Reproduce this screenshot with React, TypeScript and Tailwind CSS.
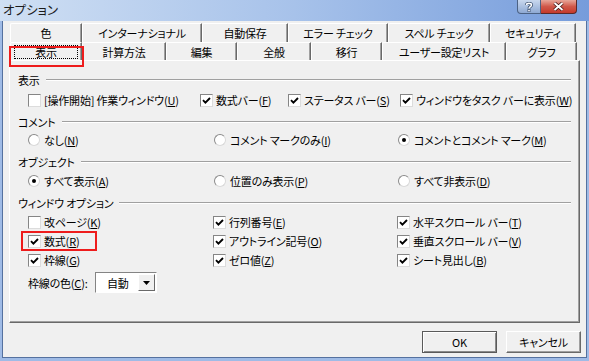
import React from 'react';

function Mn({ k }: { k: string }) {
  return (
    <>
      (<u className="underline-offset-[1px]">{k}</u>)
    </>
  );
}

function Check({ checked, label, k }: { checked?: boolean; label: string; k: string }) {
  return (
    <div className="flex items-center gap-[3px] whitespace-nowrap">
      <span className="flex h-[13px] w-[13px] shrink-0 items-center justify-center border border-t-[#858585] border-l-[#858585] border-b-[#dcdcdc] border-r-[#dcdcdc] bg-white">
        {checked && (
          <svg width="9" height="9" viewBox="0 0 9 9">
            <path d="M1 4.2 L3.4 6.6 L8 2" fill="none" stroke="#000" strokeWidth="1.9" />
          </svg>
        )}
      </span>
      <span>
        {label}
        <Mn k={k} />
      </span>
    </div>
  );
}

function Radio({ checked, label, k }: { checked?: boolean; label: string; k: string }) {
  return (
    <div className="flex items-center gap-[4px] whitespace-nowrap">
      <span className="flex h-[12px] w-[12px] shrink-0 items-center justify-center rounded-full border border-t-[#8a8a8a] border-l-[#8a8a8a] border-b-[#d8d8d8] border-r-[#d8d8d8] bg-white">
        {checked && <span className="h-[4px] w-[4px] rounded-full bg-black" />}
      </span>
      <span>
        {label}
        <Mn k={k} />
      </span>
    </div>
  );
}

function Group({ title }: { title: string }) {
  return (
    <div className="flex h-[18px] items-center gap-[6px]">
      <span className="whitespace-nowrap">{title}</span>
      <div className="h-[2px] flex-1 border-t border-t-[#a0a0a0] border-b border-b-white" />
    </div>
  );
}

function Tab({ label, w, h, selected }: { label: string; w: string; h: string; selected?: boolean }) {
  return (
    <div
      className={`flex ${w} ${h} shrink-0 items-center justify-center rounded-tl-[2px] border-l border-t border-l-white border-t-white border-r border-r-[#696969] bg-[#f0f0f0] shadow-[inset_-1px_0_0_#a0a0a0]`}
    >
      {selected ? (
        <span className="flex h-[14px] w-[64px] items-center justify-center border border-dotted border-black">{label}</span>
      ) : (
        <span className="whitespace-nowrap">{label}</span>
      )}
    </div>
  );
}

export default function App() {
  return (
    <div className="relative h-[361px] w-[589px] overflow-hidden bg-[#9fbbe6] text-[11px] leading-[14px] tracking-[-0.2px] text-black font-['Noto_Sans_CJK_JP','Noto_Sans',sans-serif] [font-feature-settings:'palt']">
      {/* title bar */}
      <div className="flex h-[21px] items-center justify-between bg-gradient-to-r from-[#cfdff3] via-[#a7c2ea] to-[#769cdb] pl-[3px]">
        <span className="mb-[2px] text-[12.5px] tracking-normal text-[#1b1b1b]">オプション</span>
        <div className="mr-[12px] flex self-start">
          <div className="flex h-[14px] w-[24px] items-center justify-center rounded-bl-[4px] border border-t-0 border-[#4c6284] bg-gradient-to-b from-[#c9d8ee] to-[#8ea9d3]">
            <svg width="8" height="10" viewBox="0 0 8 10">
              <path d="M1.5 3 C1.5 0.8 6.5 0.8 6.5 3 C6.5 4.6 4 4.6 4 6.6" fill="none" stroke="#2a3f5f" strokeWidth="3" />
              <path d="M1.5 3 C1.5 0.8 6.5 0.8 6.5 3 C6.5 4.6 4 4.6 4 6.6" fill="none" stroke="#fff" strokeWidth="1.6" />
              <rect x="2.9" y="7.6" width="2.2" height="2.2" fill="#fff" stroke="#2a3f5f" strokeWidth="0.6" />
            </svg>
          </div>
          <div className="flex h-[14px] w-[36px] items-center justify-center rounded-br-[4px] border border-t-0 border-l-0 border-[#5a2a2a] bg-gradient-to-b from-[#e6a69a] via-[#d0584a] to-[#c4392b]">
            <svg width="11" height="9" viewBox="0 0 11 9">
              <path d="M1.5 1 L9.5 8 M9.5 1 L1.5 8" stroke="#3a1010" strokeWidth="3.4" />
              <path d="M1.5 1 L9.5 8 M9.5 1 L1.5 8" stroke="#fff" strokeWidth="2" />
            </svg>
          </div>
        </div>
      </div>

      {/* dialog body */}
      <div className="ml-[2px] h-[337px] w-[585px] border-x border-b border-[#55719f] bg-[#f0f0f0] pl-[6px] pt-[2px]">
        <div className="ml-[1px] flex">
          <Tab label="色" w="w-[72px]" h="h-[19px]" />
          <Tab label="インターナショナル" w="w-[120px]" h="h-[19px]" />
          <Tab label="自動保存" w="w-[86px]" h="h-[19px]" />
          <Tab label="エラー チェック" w="w-[100px]" h="h-[19px]" />
          <Tab label="スペル チェック" w="w-[102px]" h="h-[19px]" />
          <Tab label="セキュリティ" w="w-[86px]" h="h-[19px]" />
        </div>
        <div className="ml-[1px] flex">
          <Tab label="表示" w="w-[72px]" h="h-[18px]" selected />
          <Tab label="計算方法" w="w-[84px]" h="h-[18px]" />
          <Tab label="編集" w="w-[71px]" h="h-[18px]" />
          <Tab label="全般" w="w-[74px]" h="h-[18px]" />
          <Tab label="移行" w="w-[71px]" h="h-[18px]" />
          <Tab label="ユーザー設定リスト" w="w-[124px]" h="h-[18px]" />
          <Tab label="グラフ" w="w-[71px]" h="h-[18px]" />
        </div>

        {/* panel */}
        <div className="flex h-[263px] w-[571px] flex-col border border-t-white border-l-white border-r-[#696969] border-b-[#696969] px-[8px] pt-[10px] shadow-[inset_-1px_-1px_0_#a0a0a0]">
          <Group title="表示" />
          <div className="mt-[2px] grid h-[18px] grid-cols-[172px_88px_112px_1fr] items-center pl-[10px]">
            <Check label="[操作開始] 作業ウィンドウ" k="U" />
            <Check checked label="数式バー" k="F" />
            <Check checked label="ステータス バー" k="S" />
            <Check checked label="ウィンドウをタスク バーに表示" k="W" />
          </div>

          <div className="mt-[4px]"><Group title="コメント" /></div>
          <div className="grid h-[18px] grid-cols-[186px_184px_1fr] items-center pl-[10px]">
            <Radio label="なし" k="N" />
            <Radio label="コメント マークのみ" k="I" />
            <Radio checked label="コメントとコメント マーク" k="M" />
          </div>

          <div className="mt-[4px]"><Group title="オブジェクト" /></div>
          <div className="mt-[1px] grid h-[18px] grid-cols-[186px_184px_1fr] items-center pl-[10px]">
            <Radio checked label="すべて表示" k="A" />
            <Radio label="位置のみ表示" k="P" />
            <Radio label="すべて非表示" k="D" />
          </div>

          <div className="mt-[4px]"><Group title="ウィンドウ オプション" /></div>
          <div className="mt-[1px] grid grid-cols-[185px_184px_1fr] gap-y-[1px] pl-[10px]">
            <div className="flex h-[18px] items-center"><Check label="改ページ" k="K" /></div>
            <div className="flex h-[18px] items-center"><Check checked label="行列番号" k="E" /></div>
            <div className="flex h-[18px] items-center"><Check checked label="水平スクロール バー" k="T" /></div>
            <div className="flex h-[18px] items-center"><Check checked label="数式" k="R" /></div>
            <div className="flex h-[18px] items-center"><Check checked label="アウトライン記号" k="O" /></div>
            <div className="flex h-[18px] items-center"><Check checked label="垂直スクロール バー" k="V" /></div>
            <div className="flex h-[18px] items-center"><Check checked label="枠線" k="G" /></div>
            <div className="flex h-[18px] items-center"><Check checked label="ゼロ値" k="Z" /></div>
            <div className="flex h-[18px] items-center"><Check checked label="シート見出し" k="B" /></div>
          </div>

          <div className="mt-[3px] flex h-[21px] items-center pl-[10px]">
            <span className="w-[67px] whitespace-nowrap">
              枠線の色
              <Mn k="C" />:
            </span>
            <div className="flex h-[21px] w-[62px] items-center border border-t-[#848484] border-l-[#848484] border-b-white border-r-white bg-white p-[1px]">
              <span className="flex-1 pl-[10px]">自動</span>
              <div className="flex h-[17px] w-[17px] items-center justify-center border border-t-white border-l-white border-r-[#696969] border-b-[#696969] bg-[#f0f0f0]">
                <svg width="7" height="4" viewBox="0 0 7 4">
                  <path d="M0 0 H7 L3.5 4 Z" fill="#000" />
                </svg>
              </div>
            </div>
          </div>
        </div>

        {/* buttons */}
        <div className="mt-[8px] flex justify-end gap-[9px] pr-[5px]">
          <button className="flex h-[22px] w-[75px] items-center justify-center border border-[#5a5a5a] bg-[#f0f0f0] shadow-[inset_1px_1px_0_#fff,inset_-1px_-1px_0_#8a8a8a]">
            OK
          </button>
          <button className="flex h-[22px] w-[75px] items-center justify-center border border-t-white border-l-white border-r-[#696969] border-b-[#696969] bg-[#f0f0f0] shadow-[inset_-1px_-1px_0_#a0a0a0]">
            キャンセル
          </button>
        </div>
      </div>

      {/* red annotation boxes */}
      <div className="pointer-events-none absolute left-[9px] top-[46px] h-[21px] w-[75px] border-2 border-[#ee1c1c]" />
      <div className="pointer-events-none absolute left-[21px] top-[231px] h-[20px] w-[76px] border-2 border-[#ee1c1c]" />
    </div>
  );
}
